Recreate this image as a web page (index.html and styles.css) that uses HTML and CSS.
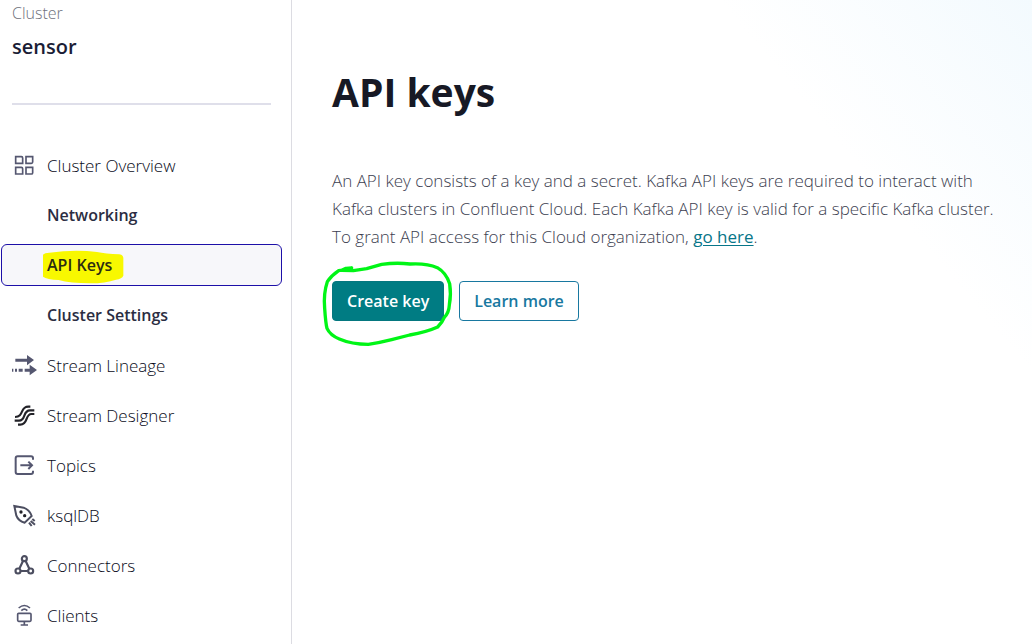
FILE: index.html
```html
<!DOCTYPE html>
<html lang="en">
<head>
<meta charset="utf-8">
<title>API keys</title>
<link rel="stylesheet" href="styles.css">
</head>
<body>
<div class="layout">
  <aside class="sidebar">
    <header class="cluster">
      <p class="cluster-label">Cluster</p>
      <p class="cluster-name">sensor</p>
    </header>
    <nav class="nav" aria-label="Cluster">
      <a class="nav-item" href="#overview">
        <svg class="icon" viewBox="0 0 72 72" fill="none" stroke="#555770" stroke-width="5"><path d="M11 11h17q4 0 4 4v16H11zM42 11h20v16q0 4-4 4H42zM11 43h17q4 0 4 4v16H11zM42 43h20v16q0 4-4 4H42z"/></svg>
        Cluster Overview</a>
      <a class="nav-item nav-sub" href="#networking">Networking</a>
      <a class="nav-item nav-sub nav-active" href="#api-keys" aria-current="page"><span class="marked"><svg class="marker" viewBox="0 0 246 102" preserveAspectRatio="none"><path d="M3 14Q8 8 22 8Q100-3 165 6Q190 11 232 13Q242 14 244 23V77Q240 86 222 89Q190 100 145 100Q85 100 50 90Q15 88 3 80Z" fill="#f8f800"/></svg><span class="marked-text">API Keys</span></span></a>
      <a class="nav-item nav-sub" href="#settings">Cluster Settings</a>
      <a class="nav-item" href="#lineage">
        <svg class="icon" viewBox="0 0 72 72" fill="#555770"><path d="M10 17h35v-11l21 15-21 16v-11H10zM53 35l22 16-22 16V56H38v-9h15zM0 47h4v9H0zM9 47h6v9H9zM20 47h12v9H20z"/></svg>
        Stream Lineage</a>
      <a class="nav-item" href="#designer">
        <svg class="icon" viewBox="0 0 72 72" fill="none" stroke="#222228" stroke-width="6.5"><path d="M55 11H49C23 11 37 42 9 42M67 22H54C31 22 43 53 21 53H8M67 33H58C39 33 49 65 25 65H18"/></svg>
        Stream Designer</a>
      <a class="nav-item" href="#topics">
        <svg class="icon" viewBox="0 0 72 72" fill="none" stroke="#555770" stroke-width="6"><path d="M63 20V16Q63 10 57 10H17Q11 10 11 16V57Q11 63 17 63H57Q63 63 63 57V53M25 37H60M49 26L60 37L49 48"/></svg>
        Topics</a>
      <a class="nav-item" href="#ksqldb">
        <svg class="icon" viewBox="0 0 72 72" fill="none" stroke="#4c4e60" stroke-width="6"><path d="M7 9L35 14Q53 21 59 39L38 59Q19 54 13 38ZM51 59L59 69M56 54L69 65M61 48L68 54"/><circle cx="27" cy="27" r="5" fill="#222228" stroke="none"/><circle cx="38" cy="38" r="5" fill="#222228" stroke="none"/></svg>
        ksqlDB</a>
      <a class="nav-item" href="#connectors">
        <svg class="icon" viewBox="0 0 72 72" fill="none" stroke="#4c4e60" stroke-width="6.5"><circle cx="37" cy="17" r="7.5"/><circle cx="18" cy="54" r="7.5"/><circle cx="56" cy="54" r="7.5"/><path d="M33 24L22 47M41 24L52 47M26 54H48"/></svg>
        Connectors</a>
      <a class="nav-item" href="#clients">
        <svg class="icon" viewBox="0 0 72 72" fill="none" stroke="#555770" stroke-width="5"><rect x="17" y="31" width="40" height="24" rx="3"/><path d="M37 56V66M26 66H48M20 15Q37 0 54 15M28 23Q37 14 46 23"/></svg>
        Clients</a>
    </nav>
  </aside>
  <main class="main">
    <h1 class="title">API keys</h1>
    <p class="intro">An API key consists of a key and a secret. Kafka API keys are required to interact with Kafka clusters in Confluent Cloud. Each Kafka API key is valid for a specific Kafka cluster. To grant API access for this Cloud organization, <a class="link" href="#cloud-keys">go here</a>.</p>
    <div class="actions">
      <div class="circled">
        <button class="button primary" type="button">Create key</button>
        <svg class="ring" viewBox="33 15 399 261" fill="none" stroke="#00f516" stroke-width="10" stroke-linecap="round" stroke-linejoin="round"><path d="M125 39L112 43L86 47Q64 62 52 80Q40 115 44 160Q47 205 51 220Q60 240 88 252Q125 268 175 268Q210 263 245 254L299 240Q350 231 383 216Q397 202 403 187Q417 173 418 150Q424 118 419 86Q408 53 382 38Q350 24 300 27Q260 22 215 28L170 41L130 47L95 46L108 40L125 39"/></svg>
      </div>
      <button class="button secondary" type="button">Learn more</button>
    </div>
  </main>
</div>
</body>
</html>
```
FILE: styles.css
```css
* { box-sizing: border-box; }
body {
  margin: 0;
  font-family: "Open Sans", "Noto Sans", sans-serif;
  font-size: 17px;
  color: #24263b;
  background: #fff;
}
p, h1 { margin: 0; }
.layout { display: flex; min-height: 100vh; }
.sidebar {
  flex: 0 0 292px;
  border-right: 1px solid #dcdce2;
}
.cluster {
  margin: 0 20px 0 12px;
  padding-bottom: 42px;
  border-bottom: 2px solid #dfdfea;
}
.cluster-label { font-size: 16px; font-weight: 300; line-height: 26px; color: #6f717c; }
.cluster-name { padding-top: 7px; font-size: 20px; font-weight: 600; line-height: 28px; color: #1b1d36; }
.nav {
  display: flex;
  flex-direction: column;
  gap: 8px;
  padding: 39px 9px 0 1px;
}
.nav-item {
  display: flex;
  align-items: center;
  gap: 11px;
  height: 42px;
  padding-left: 11px;
  color: #080a20;
  font-weight: 300;
  text-decoration: none;
}
.icon { flex: none; width: 24px; height: 24px; overflow: visible; }
.nav-sub { padding-left: 46px; font-size: 16px; font-weight: 600; color: #2b2d42; }
.nav-active {
  padding-left: 45px;
  border: 1px solid #1d10a8;
  border-radius: 6px;
  background: #f7f7fa;
}
.marked { position: relative; color: #2b2c12; }
.marked-text { position: relative; }
.marker { position: absolute; left: -5px; top: -4px; width: 82px; height: 34px; }
.main {
  flex: 1;
  padding: 64px 20px 40px 40px;
  background: linear-gradient(230deg, #f3fafe 0, #fff 240px);
}
.title { font-size: 39px; font-weight: 700; line-height: 56px; color: #171925; }
.intro {
  max-width: 680px;
  padding-top: 47px;
  font-weight: 300;
  line-height: 28px;
  color: #3c3e50;
}
.link { color: #077689; font-weight: 400; text-underline-offset: 2px; }
.actions { display: flex; gap: 15px; padding-top: 30px; }
.circled { position: relative; }
.ring { position: absolute; left: -11px; top: -21px; width: 133px; height: 87px; overflow: visible; pointer-events: none; }
.button {
  height: 40px;
  padding: 0 14px;
  border: 1px solid #04777f;
  border-radius: 4px;
  font: 600 16px "Open Sans", "Noto Sans", sans-serif;
}
.primary { background: #007c83; color: #fff; }
.secondary { background: #fff; border-color: #1878a0; color: #1878a0; }
```
